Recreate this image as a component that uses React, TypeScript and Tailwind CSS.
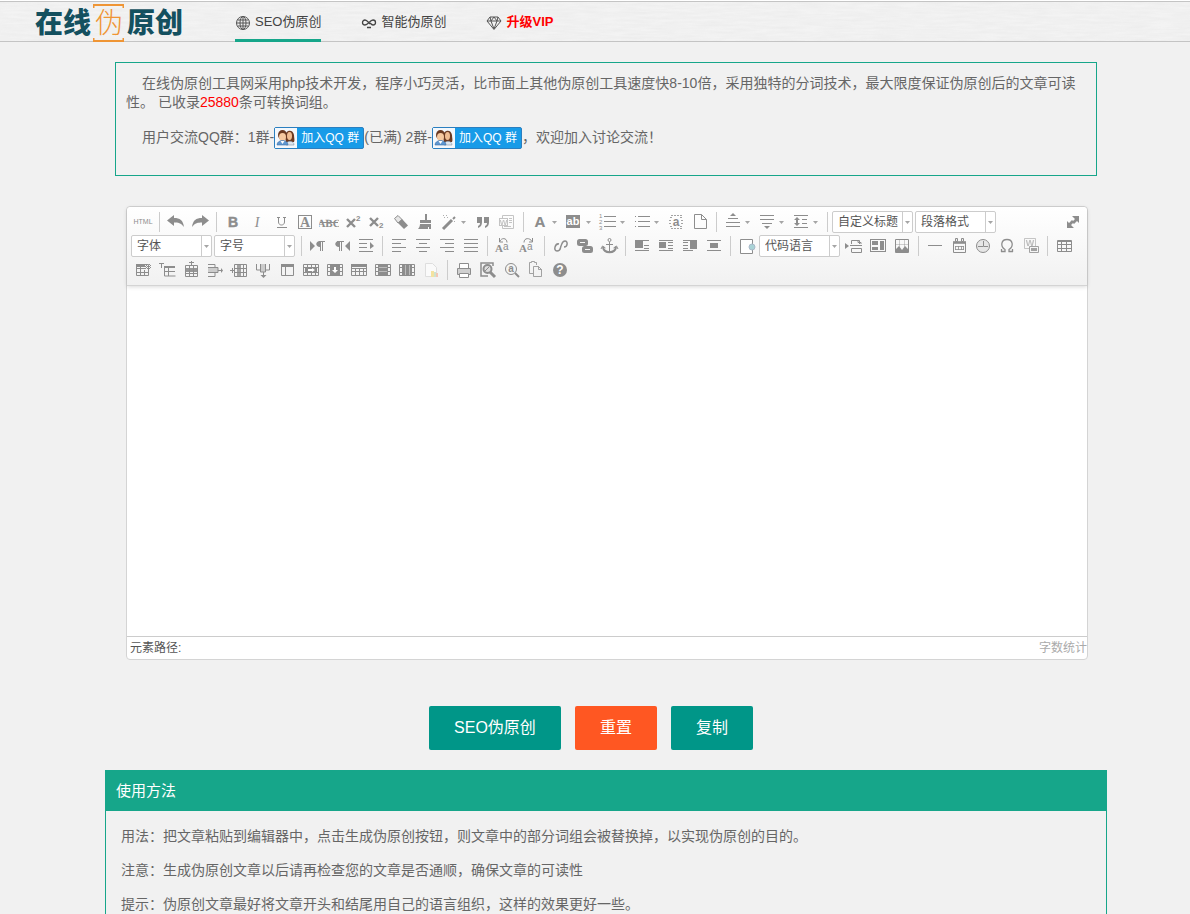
import type { ReactNode } from "react";

const icons: Record<string, ReactNode> = {
  html: <text x="10" y="12" textAnchor="middle" fontSize="7" fill="currentColor">HTML</text>,
  undo: <path fill="currentColor" d="M1 8.500 8 3v3c6 0 9 2 10 9-3-4-6-4.500-10-4.500V14z" />,
  redo: <path fill="currentColor" d="M19 8.500 12 3v3c-6 0-9 2-10 9 3-4 6-4.500 10-4.500V14z" />,
  bold: <text x="10" y="15" textAnchor="middle" fontSize="14" fontWeight="700" fill="currentColor" stroke="currentColor" strokeWidth=".5">B</text>,
  italic: <text x="10" y="15" textAnchor="middle" fontSize="14" fontStyle="italic" fontFamily="Liberation Serif" fill="currentColor">I</text>,
  underline: (
    <>
      <path fill="none" stroke="currentColor" d="M7.500 5v5c0 4 6 4 6 0V5M6 5.500h3M12 5.500h3" />
      <path stroke="currentColor" d="M6 15.500h10" />
    </>
  ),
  fontborder: (
    <>
      <rect x="3.500" y="3.500" width="13" height="13" fill="none" stroke="currentColor" />
      <text x="10" y="15" textAnchor="middle" fontSize="14" fontWeight="700" fontFamily="Liberation Serif" fill="currentColor">A</text>
    </>
  ),
  strike: (
    <>
      <text x="10" y="15" textAnchor="middle" fontSize="11" fontWeight="700" fontFamily="Liberation Serif" textRendering="geometricPrecision" fill="currentColor">ABC</text>
      <path stroke="currentColor" d="M1 10.500h18" />
    </>
  ),
  sup: (
    <>
      <path fill="none" stroke="currentColor" strokeWidth="2.400" d="M4 7l8 8M12 7l-8 8" />
      <text x="13" y="9" fontSize="8" fontWeight="700" fill="currentColor">2</text>
    </>
  ),
  sub: (
    <>
      <path fill="none" stroke="currentColor" strokeWidth="2.400" d="M3 6l8 8M11 6l-8 8" />
      <text x="12" y="16" fontSize="8" fontWeight="700" fill="currentColor">2</text>
    </>
  ),
  eraser: (
    <>
      <path fill="#e6e6e6" stroke="currentColor" d="M3.500 6.500 7 3.500l4 4-4 3.500z" />
      <path fill="currentColor" d="M7 11l4-4 6 6.500-4 3.500z" />
    </>
  ),
  brush: <path fill="currentColor" d="M10 2h2v6h4v3H5V8h5zM5 12h11v5h-2v-2h-1v2H3c1-1 2-3 2-5z" />,
  wand: (
    <>
      <path stroke="currentColor" strokeWidth="3" d="M4 17 13 8" />
      <path stroke="currentColor" strokeWidth="2" d="m14 7 2-2" />
      <path stroke="currentColor" strokeDasharray="1 2" d="M4 3.500h5M5 5.500h6M15 9.500h2" opacity=".7" />
    </>
  ),
  quote: <path fill="currentColor" d="M4 5h5v5c0 3-1 5-4 6v-2c1-1 2-1 2-3H4zM11 5h5v5c0 3-1 5-4 6v-2c1-1 2-1 2-3h-3z" />,
  pasteplain: (
    <g opacity=".5">
      <path fill="none" stroke="currentColor" d="M5.500 6V3.500h11v13h-11V14M12 6.500h3M12 8.500h3M12 10.500h3M7 14.500h7" />
      <rect x="2.500" y="6.500" width="8" height="7" fill="#fff" stroke="currentColor" />
      <text x="6.500" y="13" textAnchor="middle" fontSize="8" fontWeight="700" fill="currentColor">W</text>
    </g>
  ),
  forecolor: <text x="10" y="15" textAnchor="middle" fontSize="15" fontWeight="700" fontFamily="Open Sans" fill="currentColor">A</text>,
  backcolor: (
    <>
      <path fill="currentColor" d="M2 3h14v13H2z" />
      <text x="9" y="13" textAnchor="middle" fontSize="11" fontWeight="700" fill="#fff">ab</text>
    </>
  ),
  ol: (
    <>
      <path stroke="currentColor" d="M6 4.500h12M6 9.500h12M6 14.500h12" />
      <g fontSize="6" fill="currentColor">
        <text x="1" y="6">1</text>
        <text x="1" y="12">2</text>
        <text x="1" y="18">3</text>
      </g>
    </>
  ),
  ul: <path stroke="currentColor" d="M3 4.500h1M3 9.500h1M3 14.500h1M6 4.500h12M6 9.500h12M6 14.500h12" />,
  selectall: (
    <>
      <path fill="none" stroke="currentColor" strokeDasharray="2 1" opacity=".8" d="M5 3.500h11M4 5.500h2M14 5.500h3M3 8.500h2M15 8.500h2M3 11.500h2M15 11.500h2M4 14.500h3M14 14.500h3M5 16.500h11" />
      <text x="10" y="14" textAnchor="middle" fontSize="12" fontWeight="700" fill="currentColor">a</text>
    </>
  ),
  clear: <path fill="none" stroke="currentColor" d="M4.500 2.500h7l5 5v9h-12zM11.500 2.500v5h5" />,
  spacetop: (
    <>
      <path fill="currentColor" d="m10 1 3 3H7z" />
      <path stroke="currentColor" d="M5 6.500h10M3 10.500h14M3 14.500h14" />
    </>
  ),
  spacebottom: (
    <>
      <path stroke="currentColor" d="M3 3.500h14M3 7.500h14M5 11.500h10" />
      <path fill="currentColor" d="m10 17 3-3H7z" />
    </>
  ),
  lineheight: (
    <>
      <path stroke="currentColor" d="M3 3.500h14M11 7.500h5M11 11.500h5M3 15.500h14" />
      <path fill="currentColor" d="M6 5l3 3H7v3h2l-3 3-3-3h2V8H3z" />
    </>
  ),
  fullscreen: <path fill="currentColor" d="M10 4h7v7l-2-2-3 3-2-2 3-3zM12 16H5V9l2 2 3-3 2 2-3 3z" />,
  ltr: (
    <>
      <path fill="currentColor" d="m2 5 5 5-5 5zM12 5c-5 0-5 6 0 6z" />
      <path stroke="currentColor" d="M12.500 5v10M14.500 5v10M11 5.500h6" />
    </>
  ),
  rtl: (
    <>
      <path fill="currentColor" d="m18 5-5 5 5 5zM7 5c-5 0-5 6 0 6z" />
      <path stroke="currentColor" d="M7.500 5v10M9.500 5v10M5 5.500h7" />
    </>
  ),
  indent: (
    <>
      <path stroke="currentColor" d="M3 3.500h14M3 7.500h8M3 11.500h8M3 15.500h14" />
      <path fill="currentColor" d="m14 6 4 4-4 3z" />
    </>
  ),
  left: <path stroke="currentColor" d="M3 3.500h14M3 7.500h9M3 11.500h14M3 15.500h9" />,
  center: <path stroke="currentColor" d="M3 3.500h14M6 7.500h8M3 11.500h14M6 15.500h8" />,
  right: <path stroke="currentColor" d="M3 3.500h14M8 7.500h9M3 11.500h14M8 15.500h9" />,
  justify: <path stroke="currentColor" d="M3 3.500h14M3 7.500h14M3 11.500h14M3 15.500h14" />,
  upper: (
    <>
      <text x="1" y="16" fontSize="11" fontFamily="Liberation Serif" fontWeight="700" fill="currentColor">A</text>
      <text x="9" y="14" fontSize="10" fill="currentColor">a</text>
      <path fill="none" stroke="currentColor" d="M6 5.500c1-4 7-4 7 1M5.500 2v4H9" />
    </>
  ),
  lower: (
    <>
      <text x="1" y="16" fontSize="11" fontFamily="Liberation Serif" fontWeight="700" fill="currentColor">A</text>
      <text x="9" y="14" fontSize="10" fill="currentColor">a</text>
      <path fill="none" stroke="currentColor" d="M6 6.500c0-5 6-5 8-1M14.500 2v4H11" />
    </>
  ),
  link: <path fill="none" stroke="currentColor" strokeWidth="1.500" d="M8 8c-4-1-6 7-2 7s3-3 4-5 1-5 4-5 3 6-1 6" />,
  unlink: (
    <>
      <rect x="3.500" y="4.500" width="8" height="4" rx="1" fill="none" stroke="currentColor" strokeWidth="3" />
      <rect x="8.500" y="11.500" width="8" height="4" rx="1" fill="none" stroke="currentColor" strokeWidth="3" />
      <path stroke="currentColor" strokeWidth="2" d="M10 7v6" />
    </>
  ),
  anchor: (
    <>
      <circle cx="10.500" cy="4" r="1.500" fill="none" stroke="currentColor" />
      <path fill="none" stroke="currentColor" d="M10.500 6v10M7 8.500h7" />
      <path fill="none" stroke="currentColor" strokeWidth="2" d="M4 11c1 7 12 7 13 0" />
      <path fill="none" stroke="currentColor" d="M2 13l1.500-3 3 2M19 13l-1.500-3-3 2" />
    </>
  ),
  imgnone: (
    <>
      <path fill="currentColor" d="M3 5h8v7H3z" />
      <path stroke="currentColor" d="M3 4.500h14M12 9.500h5M12 12.500h5M3 14.500h14" />
    </>
  ),
  imgleft: (
    <>
      <path fill="currentColor" d="M3 6h7v6H3z" />
      <path stroke="currentColor" d="M3 4.500h14M12 6.500h5M12 9.500h5M12 12.500h5M3 14.500h14" />
    </>
  ),
  imgright: (
    <>
      <path fill="currentColor" d="M10 5h7v8h-7z" />
      <path stroke="currentColor" d="M3 4.500h14M3 6.500h5M3 9.500h5M3 12.500h5M3 14.500h10" />
    </>
  ),
  imgcenter: (
    <>
      <path fill="currentColor" d="M6 7h8v5H6z" />
      <path stroke="currentColor" d="M3 4.500h14M3 14.500h14" />
    </>
  ),
  code: (
    <>
      <path fill="#fff" stroke="currentColor" d="M3.500 3.500h12v14h-12z" />
      <circle cx="15" cy="11" r="3" fill="#a9d3d6" stroke="#aab9c9" />
    </>
  ),
  pagebreak: (
    <>
      <path fill="currentColor" d="m1 7 4 3-4 3z" />
      <path fill="none" stroke="currentColor" d="M6 9.500h12M7.500 8V4.500h8V8M7.500 16v-3.500h10v4h-10M14 4.500v2h3V8" />
    </>
  ),
  template: (
    <>
      <rect x="2.500" y="3.500" width="15" height="12" fill="none" stroke="currentColor" />
      <path fill="currentColor" d="M4 5h6v4H4zM4 11h6v3H4zM12 5h4v9h-4z" />
    </>
  ),
  background: (
    <>
      <path fill="none" stroke="currentColor" d="M3.500 3.500h13v13h-13z" />
      <path fill="none" stroke="currentColor" opacity=".4" d="M7.500 4v8M12.500 4v7M4 8.500h12" />
      <path fill="currentColor" d="M4 16v-3l3-3 3 4 3-4 3 3v3z" />
    </>
  ),
  hr: <path stroke="currentColor" d="M3 9.500h14" />,
  date: (
    <>
      <path fill="currentColor" d="M4 5h13v3H4z" opacity=".8" />
      <path fill="none" stroke="currentColor" d="M4.500 6.500h12v10h-12z" />
      <path fill="none" stroke="currentColor" d="M6 10.500h9M6 13.500h9M6.500 10v4M9.500 10v4M12.500 10v4M14.500 10v4" opacity=".8" />
      <path fill="#eee" stroke="currentColor" d="M6.500 2.500h2v3h-2zM12.500 2.500h2v3h-2z" />
    </>
  ),
  time: (
    <>
      <circle cx="10" cy="10" r="6.500" fill="#e6e6e6" stroke="currentColor" />
      <path fill="none" stroke="currentColor" d="M10.500 5v5.500H15M5 10.500h5" />
    </>
  ),
  omega: <path fill="none" stroke="currentColor" strokeWidth="1.300" d="M4 15.500h4v-2c-5-3-4-10 2-10s7 7 2 10v2h4M4.500 13v3M15.500 13v3" />,
  wordimage: (
    <g opacity=".8">
      <path fill="none" stroke="currentColor" opacity=".6" d="M3.500 2.500h11v10h-11z" />
      <text x="9" y="10" textAnchor="middle" fontSize="9" fontWeight="700" fill="currentColor" opacity=".7">W</text>
      <path fill="#f5f5f5" stroke="currentColor" d="M8.500 10.500h9v6h-9z" />
      <path fill="currentColor" d="M10 12h6v3h-6z" />
    </g>
  ),
  table: (
    <>
      <path fill="none" stroke="currentColor" d="M3.500 4.500h14v11h-14zM3 8.500h14M3 12.500h14M7.500 5v11M12.500 5v11" />
      <path stroke="currentColor" d="M3 5.500h14" />
    </>
  ),
  deltable: (
    <>
      <path fill="none" stroke="currentColor" d="M3.500 4.500h12v11h-12zM3 8.500h9M3 12.500h13M7.500 6v10M11.500 10v6" />
      <path fill="currentColor" d="M3 4h9v3H3z" />
      <path stroke="currentColor" strokeDasharray="1 1" d="M12 4.500h6M13 5.500h5M12 6.500h6M13 7.500h5M12 8.500h6" />
    </>
  ),
  paratable: (
    <>
      <path fill="none" stroke="currentColor" d="M2 3.500h5M4.500 3v5M7.500 7v9h11M8 11.500h10M11.500 8v8" />
      <path fill="currentColor" d="M7 6h11v2H7z" />
    </>
  ),
  insrow: (
    <>
      <path fill="none" stroke="currentColor" d="M10.500 1v4M8 2.500h5M4.500 5.500h12v11h-12zM4 13.500h13M8.500 6v11M12.500 6v11" />
      <path fill="currentColor" d="M4 8h13v4H4z" opacity=".9" />
    </>
  ),
  delrow: (
    <>
      <path fill="#ccc" d="M3 8h10v4H3z" />
      <path fill="none" stroke="currentColor" d="M3 4.500h7v3M3 16.500h7v-4M3 7.500h10v5H3M13 10.500h4" />
      <path fill="currentColor" d="m16 8 2 2.500-2 2.500z" />
    </>
  ),
  inscol: (
    <>
      <path fill="none" stroke="currentColor" d="M5.500 4.500h12v12h-12zM5 8.500h12M5 12.500h12M14.500 5v11M1 10.500h4M3.500 8v5" />
      <path fill="currentColor" d="M8 5h4v11H8z" opacity=".8" />
    </>
  ),
  delcol: (
    <>
      <path fill="#ccc" d="M8 4h4v8H8z" />
      <path fill="none" stroke="currentColor" d="M3.500 4v6h4M16.500 4v6h-4M7.500 4v8h5V4M10.500 12v4" />
      <path fill="currentColor" d="M7.500 15h6l-3 3z" />
    </>
  ),
  caption: (
    <>
      <path fill="none" stroke="currentColor" d="M4.500 4.500h12v11h-12zM8.500 6v10" />
      <path fill="currentColor" d="M4 4h13v3H4z" />
    </>
  ),
  mergeright: (
    <>
      <path fill="none" stroke="currentColor" d="M2.500 4.500h15v11h-15zM2 7.500h16M2 12.500h16M6.500 4v3M10.500 4v3M14.500 4v3M6.500 13v3M10.500 13v3M14.500 13v3" />
      <path fill="currentColor" d="M4 8h12v4H4z" />
      <path fill="#fff" d="M7 9h4V8l3 2-3 2v-1H7z" />
    </>
  ),
  mergedown: (
    <>
      <path fill="none" stroke="currentColor" d="M2.500 4.500h15v11h-15zM5.500 4v12M14.500 4v12M2 7.500h3M2 11.500h3M15 7.500h3M15 11.500h3" />
      <path fill="currentColor" d="M6 5h8v10H6z" />
      <path fill="#fff" d="M9 7h2v3h2l-3 3-3-3h2z" />
    </>
  ),
  mergecells: (
    <>
      <path fill="none" stroke="currentColor" d="M2.500 4.500h15v11h-15zM2 8.500h16M2 11.500h16M6.500 8v8M10.500 8v8M14.500 8v8" />
      <path fill="currentColor" d="M2 4h16v3H2z" />
    </>
  ),
  splitrows: (
    <>
      <path fill="currentColor" d="M5 4h10v12H5z" />
      <path fill="none" stroke="currentColor" d="M2.500 4.500h15v11h-15zM2 7.500h16M2 11.500h16" />
      <path stroke="#bbb" d="M6 7.500h8M6 11.500h8" />
    </>
  ),
  splitcols: (
    <>
      <path fill="currentColor" d="M5 5h10v10H5z" />
      <path fill="none" stroke="currentColor" d="M2.500 4.500h15v11h-15zM2 7.500h16M2 12.500h16" />
      <path stroke="#bbb" d="M8.500 5v10M12.500 5v10" />
    </>
  ),
  charts: (
    <>
      <path fill="#fafafa" stroke="#dedede" d="M4.500 3.500h7l4 4v9h-11z" />
      <path fill="#f4e3a0" d="M10 11h3v6h-3z" />
      <path fill="#cfe3cf" d="M13 12h2v5h-2z" />
      <path fill="#f2c7b5" d="M15 13h2v4h-2z" />
    </>
  ),
  print: (
    <>
      <path fill="#fff" stroke="currentColor" d="M5.500 3.500h9v5h-9z" />
      <path fill="#cfcfcf" stroke="currentColor" d="M3.500 8.500h13v6h-13z" />
      <path fill="#fff" stroke="currentColor" d="M5.500 13.500h9v4h-9z" />
    </>
  ),
  preview: (
    <>
      <path fill="none" stroke="currentColor" strokeWidth="1.500" d="M15 6V3H3v13h7" />
      <circle cx="9.500" cy="9" r="4" fill="#ddd" stroke="currentColor" strokeWidth="2" />
      <path stroke="currentColor" strokeWidth="3" d="m12 12 5 5" />
      <path stroke="currentColor" d="m7 11 4-4" />
    </>
  ),
  search: (
    <>
      <circle cx="9" cy="9" r="5.500" fill="none" stroke="currentColor" />
      <text x="9" y="12" textAnchor="middle" fontSize="10" fontWeight="700" fill="currentColor">a</text>
      <path stroke="currentColor" strokeWidth="2" d="m13 13 4 4" />
    </>
  ),
  paste: <path fill="none" stroke="currentColor" opacity=".8" d="M7 13.500H3.500v-11h2v-1h3v1h2V5M7.500 6.500h5l3 3v7h-8zM12.500 6.500v3h3" />,
  help: (
    <>
      <circle cx="10" cy="10" r="7" fill="currentColor" />
      <text x="10" y="14" textAnchor="middle" fontSize="12" fontWeight="700" fill="#fff">?</text>
    </>
  ),
};

// "|" is a separator, a trailing "+" marks a split button, "=" a drop-down list
const toolbar = [
  "html | undo redo | bold italic underline fontborder strike sup sub eraser brush wand+ quote pasteplain | forecolor+ backcolor+ ol+ ul+ selectall clear | spacetop+ spacebottom+ lineheight+ | =自定义标题 =段落格式",
  "=字体 =字号 | ltr rtl indent | left center right justify | upper lower | link unlink anchor | imgnone imgleft imgright imgcenter | code =代码语言 pagebreak template background | hr date time omega wordimage | table",
  "deltable paratable insrow delrow inscol delcol caption mergeright mergedown mergecells splitrows splitcols charts | print preview search paste help",
];

const Caret = () => (
  <svg className="shrink-0" width="5" height="3" viewBox="0 0 5 3">
    <path fill="#a5a5a5" d="M0 0h5L2.500 3z" />
  </svg>
);

function Tool({ name }: { name: string }) {
  if (name === "|") {
    return <span className="mx-1 h-5 w-px bg-[#ccc]" />;
  }
  if (name.startsWith("=")) {
    const label = name.slice(1);
    return (
      <span className="relative mr-0.5">
        <select
          aria-label={label}
          className="block h-[22px] w-[81px] appearance-none rounded-xs border border-[#ccc] bg-white pl-[5px] text-xs leading-5 text-[#555]"
        >
          <option>{label}</option>
        </select>
        <span className="pointer-events-none absolute inset-y-px right-px flex w-[10px] items-center justify-center border-l border-[#ccc]">
          <Caret />
        </span>
      </span>
    );
  }
  const split = name.endsWith("+");
  const key = name.replace("+", "");
  return (
    <button type="button" aria-label={key} className={split ? "flex h-6 w-[34px] items-center pl-0.5" : "flex h-6 w-6 items-center justify-center"}>
      <svg className="shrink-0" width="20" height="20" viewBox="0 0 20 20">
        {icons[key]}
      </svg>
      {split ? <span className="ml-[2px]"><Caret /></span> : null}
    </button>
  );
}

function JoinGroup() {
  return (
    <a href="#" className="inline-flex h-[22px] w-[90px] items-center rounded-xs border border-[#2b7fc0] bg-[#189be8] indent-0 align-middle text-xs leading-5 text-white">
      <svg className="h-5 w-[22px] shrink-0 bg-[#f4f8fc]" viewBox="0 0 22 20">
        <path fill="#6b3a22" d="M10 10c-1-8 8-10 9-3 0 3 1 5 0 7h-8z" />
        <ellipse cx="14.500" cy="8" rx="2.500" ry="4" fill="#f0bd92" />
        <path fill="#dde5ee" stroke="#7f93a8" strokeWidth=".6" d="M11 17c0-5 8-5 8 0z" />
        <ellipse cx="7.500" cy="7" rx="4.500" ry="5" fill="#6b3a22" />
        <ellipse cx="7.500" cy="9" rx="3.500" ry="4" fill="#f6c9a0" />
        <path fill="#5f97d0" stroke="#3a6ea8" strokeWidth=".6" d="M2 17c0-6 11-6 11 0z" />
        <path fill="#fff" d="m5.500 13 2 3 2-3z" />
      </svg>
      <span className="pl-1 whitespace-nowrap">加入QQ 群</span>
    </a>
  );
}

const navItem = "box-content flex h-[33px] items-center gap-1 border-b-[3px] pt-1 text-[13px]";

function Header() {
  return (
    <header className="relative mt-px flex border-y border-[#c4c4c4] bg-[#f3f3f3] pl-[35px]">
      <svg className="absolute inset-0 h-full w-full" aria-hidden="true">
        <filter id="grain">
          <feTurbulence type="fractalNoise" baseFrequency="0.04 0.4" numOctaves="3" seed="4" />
          <feColorMatrix values="0 0 0 0 .6  0 0 0 0 .6  0 0 0 0 .6  .5 0 0 0 -.12" />
        </filter>
        <rect width="100%" height="100%" filter="url(#grain)" opacity=".5" />
      </svg>
      <a href="#" className="relative flex h-[39px] w-[200px] items-center pt-1 text-[28px] leading-8 font-black text-[#14505f]">
        在线
        <span className="relative mx-1 font-light text-[#ef9535]">
          伪
          <svg className="absolute -top-1 -left-0.5" width="31" height="38" viewBox="0 0 31 38" fill="none" stroke="currentColor" strokeWidth="2">
            <path d="M.5 4V1h30v3M.5 34v3h30v-3" />
          </svg>
        </span>
        原创
      </a>
      <nav className="relative -mb-px flex gap-10 text-[#444]">
        <a href="#" className={`${navItem} border-[#16a68a]`}>
          <svg width="16" height="16" viewBox="0 0 16 16" fill="none" stroke="#555">
            <circle cx="8" cy="8" r="6.500" />
            <ellipse cx="8" cy="8" rx="3" ry="6.500" />
            <path d="M8 1.500v13M1.500 8h13M2.500 5h11M2.500 11h11" />
          </svg>
          SEO伪原创
        </a>
        <a href="#" className={`${navItem} border-transparent`}>
          <svg width="16" height="16" viewBox="0 0 16 16" fill="none" stroke="#444" strokeWidth="1.300">
            <path d="M9 9C7 7 6 5 4 5a2.500 2.500 0 0 0 0 5c3 0 5-5 8-5a2.500 2.500 0 0 1 0 5c-1 0-2-1-3-2M6 12.500h4" />
          </svg>
          智能伪原创
        </a>
        <a href="#" className={`${navItem} border-transparent font-bold text-[#f00]`}>
          <svg width="16" height="16" viewBox="0 0 16 16" fill="none" stroke="#555">
            <path d="M4 2h8l3 4-7 8.500L1 6zM1 6h14M4 2l1 4 3 8 3-8 1-4M5 6l3-4 3 4" />
          </svg>
          升级VIP
        </a>
      </nav>
    </header>
  );
}

function Editor() {
  return (
    <section className="mt-[30px] mr-[19px] ml-[21px] rounded border border-[#d4d4d4] bg-white">
      <div className="relative rounded-t border-b border-[#d4d4d4] bg-linear-to-b from-white to-[#f1f1f1] py-[3px] pl-1 text-[#8d8d8d] shadow-[0_1px_4px_rgba(0,0,0,0.15)]">
        {toolbar.map((row) => (
          <div key={row} className="flex min-h-6 flex-wrap items-center">
            {row.split(" ").map((name, i) => <Tool key={i} name={name} />)}
          </div>
        ))}
        <div className="absolute top-[3px] right-[3px]">
          <Tool name="fullscreen" />
        </div>
      </div>
      <textarea aria-label="编辑器" className="block h-[350px] w-full resize-none p-2 outline-none" />
      <div className="flex h-[23px] items-center justify-between border-t border-[#ccc] pl-[3px] text-xs text-[#555]">
        <span>元素路径:</span>
        <span className="text-[#aaa]">字数统计</span>
      </div>
    </section>
  );
}

export default function App() {
  return (
    <div className="min-h-screen bg-[#f1f1f1] font-['Liberation_Sans','Noto_Sans_CJK_SC',sans-serif] text-sm text-[#666]" lang="zh-CN">
      <Header />
      <main className="pt-5 pl-[22px]">
        <div className="mx-auto max-w-[1002px]">
          <section className="mx-[10px] border border-[#16a68a] px-[10px] pt-[11px] pb-[26px] leading-[19px]">
            <p className="indent-4">
              在线伪原创工具网采用php技术开发，程序小巧灵活，比市面上其他伪原创工具速度快8-10倍，采用独特的分词技术，最大限度保证伪原创后的文章可读性。 已收录
              <span className="text-[#f00]">25880</span>条可转换词组。
            </p>
            <p className="mt-[15px] indent-4">
              用户交流QQ群：1群-
              <JoinGroup />
              (已满) 2群-
              <JoinGroup />
              ，欢迎加入讨论交流！
            </p>
          </section>
          <Editor />
          <div className="mt-[46px] flex justify-center gap-[14px] pr-[30px] text-base text-white">
            <button type="button" className="h-11 rounded-xs bg-[#009688] px-[25px]">SEO伪原创</button>
            <button type="button" className="h-11 rounded-xs bg-[#ff5722] px-[25px]">重置</button>
            <button type="button" className="h-11 rounded-xs bg-[#009688] px-[25px]">复制</button>
          </div>
          <section className="mt-5 border border-[#16a68a]">
            <h2 className="h-10 bg-[#16a68a] pl-[10px] text-[15px] leading-10 text-white">使用方法</h2>
            <div className="flex flex-col gap-[14px] px-[15px] py-[15px] leading-5">
              <p>用法：把文章粘贴到编辑器中，点击生成伪原创按钮，则文章中的部分词组会被替换掉，以实现伪原创的目的。</p>
              <p>注意：生成伪原创文章以后请再检查您的文章是否通顺，确保文章的可读性</p>
              <p>提示：伪原创文章最好将文章开头和结尾用自己的语言组织，这样的效果更好一些。</p>
            </div>
          </section>
        </div>
      </main>
    </div>
  );
}
